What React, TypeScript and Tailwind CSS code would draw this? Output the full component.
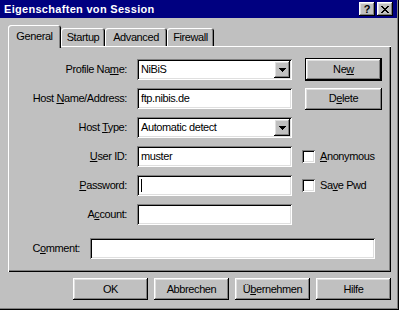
import React from "react";

const raised =
  "shadow-[inset_-1px_-1px_#000,inset_1px_1px_#fff,inset_-2px_-2px_#808080,inset_2px_2px_#dfdfdf]";
const sunken =
  "shadow-[inset_1px_1px_#808080,inset_-1px_-1px_#fff,inset_2px_2px_#000,inset_-2px_-2px_#dfdfdf]";
const tabShadow =
  "shadow-[inset_1px_1px_#fff,inset_-1px_0_#000,inset_-2px_0_#808080]";

function U({ c }: { c: string }) {
  return <span className="underline underline-offset-[1px] decoration-1">{c}</span>;
}

function Arrow() {
  return (
    <svg width="7" height="4" viewBox="0 0 7 4" shapeRendering="crispEdges">
      <rect x="0" y="0" width="7" height="1" fill="#000" />
      <rect x="1" y="1" width="5" height="1" fill="#000" />
      <rect x="2" y="2" width="3" height="1" fill="#000" />
      <rect x="3" y="3" width="1" height="1" fill="#000" />
    </svg>
  );
}

function CloseGlyph() {
  const px: [number, number][] = [];
  const rows = [
    "xx....xx",
    ".xx..xx.",
    "..xxxx..",
    "...xx...",
    "..xxxx..",
    ".xx..xx.",
    "xx....xx",
  ];
  rows.forEach((r, y) =>
    r.split("").forEach((ch, x) => {
      if (ch === "x") px.push([x, y]);
    })
  );
  return (
    <svg width="8" height="7" viewBox="0 0 8 7" shapeRendering="crispEdges">
      {px.map(([x, y]) => (
        <rect key={`${x}-${y}`} x={x} y={y} width="1" height="1" fill="#000" />
      ))}
    </svg>
  );
}

function Combo({ value }: { value: string }) {
  return (
    <div className={`h-[21px] bg-white ${sunken} flex items-center pl-[4px]`}>
      <span className="flex-1">{value}</span>
      <div
        className={`mr-[2px] w-[16px] h-[17px] bg-[#c0c0c0] ${raised} flex items-center justify-center`}
      >
        <Arrow />
      </div>
    </div>
  );
}

function Field({ children }: { children?: React.ReactNode }) {
  return (
    <div className={`h-[21px] bg-white ${sunken} flex items-center pl-[4px]`}>
      {children}
    </div>
  );
}

function Check({ children }: { children: React.ReactNode }) {
  return (
    <div className="flex items-center gap-[5px]">
      <div className={`w-[13px] h-[13px] bg-white ${sunken}`} />
      <span>{children}</span>
    </div>
  );
}

function Btn({ children }: { children: React.ReactNode }) {
  return (
    <div
      className={`w-[75px] h-[22px] bg-[#c0c0c0] ${raised} flex items-center justify-center`}
    >
      {children}
    </div>
  );
}

export default function App() {
  return (
    <div className="w-[399px] h-[310px] bg-[#c0c0c0] font-['Liberation_Sans',Arial,sans-serif] text-[11px] leading-none tracking-[-0.4px] text-black shadow-[inset_-1px_-1px_#000,inset_-2px_-2px_#808080] flex flex-col select-none">
      {/* Title bar */}
      <div className="h-[18px] w-[397px] bg-[#000080] flex items-center justify-between pl-[4px] pr-[4px]">
        <span className="text-white font-bold tracking-[0.3px] text-[11px]">
          Eigenschaften von Session
        </span>
        <div className="flex gap-[2px]">
          <div
            className={`w-[16px] h-[14px] bg-[#c0c0c0] ${raised} flex items-center justify-center font-bold text-[11px] tracking-normal`}
          >
            ?
          </div>
          <div
            className={`w-[16px] h-[14px] bg-[#c0c0c0] ${raised} flex items-center justify-center`}
          >
            <CloseGlyph />
          </div>
        </div>
      </div>

      <div className="pl-[8px] pt-[7px] flex flex-col">
        {/* Tabs */}
        <div className="flex items-end h-[23px] -mb-[2px] relative z-10">
          <div
            className={`w-[53px] h-[23px] bg-[#c0c0c0] rounded-t-[3px] ${tabShadow} flex justify-center pt-[6px]`}
          >
            General
          </div>
          <div
            className={`w-[44px] h-[18px] mb-[2px] rounded-t-[3px] ${tabShadow} flex justify-center pt-[4px]`}
          >
            Startup
          </div>
          <div
            className={`w-[62px] h-[18px] mb-[2px] rounded-t-[3px] ${tabShadow} flex justify-center pt-[4px]`}
          >
            Advanced
          </div>
          <div
            className={`w-[47px] h-[18px] mb-[2px] rounded-t-[3px] ${tabShadow} flex justify-center pt-[4px]`}
          >
            Firewall
          </div>
        </div>

        {/* Panel */}
        <div className="w-[383px] h-[226px] shadow-[inset_1px_1px_#fff,inset_-1px_-1px_#000,inset_-2px_-2px_#808080] pt-[13px] flex flex-col">
          <div className="grid grid-cols-[119px_155px_auto] gap-x-[10px] gap-y-[8px] auto-rows-[21px] items-center">
            <div className="text-right">
              Profile Na<U c="m" />e:
            </div>
            <Combo value="NiBiS" />
            <div
              className={`ml-[3px] w-[77px] h-[23px] border border-black bg-[#c0c0c0] ${raised} flex items-center justify-center`}
            >
              Ne<U c="w" />
            </div>

            <div className="text-right">
              Host <U c="N" />ame/Address:
            </div>
            <Field>ftp.nibis.de</Field>
            <div
              className={`ml-[3px] w-[77px] h-[22px] bg-[#c0c0c0] ${raised} flex items-center justify-center`}
            >
              D<U c="e" />lete
            </div>

            <div className="text-right">
              Host <U c="T" />ype:
            </div>
            <Combo value="Automatic detect" />
            <div />

            <div className="text-right">
              <U c="U" />ser ID:
            </div>
            <Field>muster</Field>
            <Check>
              <U c="A" />nonymous
            </Check>

            <div className="text-right">
              <U c="P" />assword:
            </div>
            <Field>
              <div className="w-px h-[13px] bg-black" />
            </Field>
            <Check>
              Sa<U c="v" />e Pwd
            </Check>

            <div className="text-right">
              A<U c="c" />count:
            </div>
            <Field />
            <div />
          </div>

          <div className="flex items-center mt-[13px]">
            <div className="w-[72px] text-right">
              C<U c="o" />mment:
            </div>
            <div className="ml-[10px] w-[285px]">
              <Field />
            </div>
          </div>
        </div>

        {/* Bottom buttons */}
        <div className="w-[383px] flex justify-end gap-[6px] mt-[6px]">
          <Btn>OK</Btn>
          <Btn>Abbrechen</Btn>
          <Btn>
            Ü<U c="b" />ernehmen
          </Btn>
          <Btn>Hilfe</Btn>
        </div>
      </div>
    </div>
  );
}
